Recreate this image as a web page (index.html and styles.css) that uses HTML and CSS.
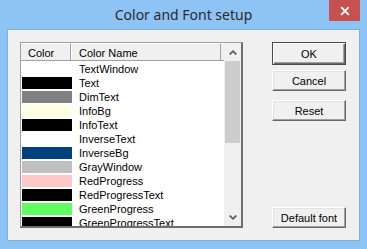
FILE: index.html
```html
<!DOCTYPE html>
<html>
<head>
<meta charset="utf-8">
<link rel="stylesheet" href="styles.css">
</head>
<body>
<div class="window">
  <div class="titlebar">
    <span class="title">Color and Font setup</span>
    <div class="close">
      <svg width="10" height="10" viewBox="0 0 10 10"><path d="M1.2 1.2 L8.8 8.8 M8.8 1.2 L1.2 8.8" stroke="#fff" stroke-width="1.9" fill="none"/></svg>
    </div>
  </div>
  <div class="client">
    <div class="listbox">
      <div class="list-main">
        <div class="header">
          <div class="hcell hcolor">Color</div>
          <div class="hcell hname">Color Name</div>
          <div class="hfill"></div>
        </div>
        <div class="rows">
          <div class="row"><span class="sw sw-white"></span><span class="name">TextWindow</span></div>
          <div class="row"><span class="sw sw-black"></span><span class="name">Text</span></div>
          <div class="row"><span class="sw sw-gray"></span><span class="name">DimText</span></div>
          <div class="row"><span class="sw sw-info"></span><span class="name">InfoBg</span></div>
          <div class="row"><span class="sw sw-black"></span><span class="name">InfoText</span></div>
          <div class="row"><span class="sw sw-white"></span><span class="name">InverseText</span></div>
          <div class="row"><span class="sw sw-blue"></span><span class="name">InverseBg</span></div>
          <div class="row"><span class="sw sw-silver"></span><span class="name">GrayWindow</span></div>
          <div class="row"><span class="sw sw-pink"></span><span class="name">RedProgress</span></div>
          <div class="row"><span class="sw sw-black"></span><span class="name">RedProgressText</span></div>
          <div class="row"><span class="sw sw-green"></span><span class="name">GreenProgress</span></div>
          <div class="row"><span class="sw sw-black"></span><span class="name">GreenProgressText</span></div>
        </div>
      </div>
      <div class="scrollbar">
        <div class="sb-btn sb-up">
          <svg width="8" height="5" viewBox="0 0 8 5"><path d="M0.7 4.5 L4 1.2 L7.3 4.5" stroke="#606060" stroke-width="1.8" fill="none"/></svg>
        </div>
        <div class="sb-track"><div class="thumb"></div></div>
        <div class="sb-btn sb-down">
          <svg width="8" height="5" viewBox="0 0 8 5"><path d="M0.7 0.5 L4 3.8 L7.3 0.5" stroke="#606060" stroke-width="1.8" fill="none"/></svg>
        </div>
      </div>
    </div>
    <div class="buttons">
      <button class="btn btn-default">OK</button>
      <button class="btn btn-cancel">Cancel</button>
      <button class="btn btn-reset">Reset</button>
      <button class="btn btn-font">Default font</button>
    </div>
  </div>
</div>
</body>
</html>
```
FILE: styles.css
```css
* { box-sizing: border-box; }
html, body { margin: 0; padding: 0; }
body { width: 367px; height: 249px; overflow: hidden; }

.window {
  width: 367px;
  height: 249px;
  background: #8ec4f5;
  display: flex;
  flex-direction: column;
}

.titlebar {
  position: relative;
  height: 29px;
  padding-top: 5px;
  text-align: center;
}
.title {
  font-family: "Noto Sans", "Open Sans", sans-serif;
  font-size: 14px;
  line-height: 19px;
  color: #2b2b2b;
}
.close {
  position: absolute;
  right: 7px;
  top: 0;
  width: 31px;
  height: 21px;
  background: #c75050;
  display: flex;
  align-items: center;
  justify-content: center;
}
.close svg { display: block; margin-top: 1px; }

.client {
  margin: 0 7px;
  height: 212px;
  border: 1px solid #7eafde;
  background: #f0f0f0;
  display: flex;
  align-items: flex-start;
  padding: 12px 0 0 12px;
  font-family: "Liberation Sans", Arial, sans-serif;
  font-size: 11px;
  color: #000;
}

.listbox {
  width: 223px;
  height: 186px;
  border-style: solid;
  border-width: 1px 2px 2px 1px;
  border-color: #a0a0a0 #6e6e6e #6e6e6e #a0a0a0;
  display: flex;
  background: #fff;
}
.list-main {
  width: 203px;
  display: flex;
  flex-direction: column;
}
.header {
  height: 18px;
  display: flex;
  background: #f0f0f0;
  border-bottom: 1px solid #a0a0a0;
}
.hcell {
  height: 17px;
  padding-top: 3px;
  line-height: 12px;
  border-right: 1px solid #a0a0a0;
  border-left: 1px solid #fff;
  border-top: 1px solid #fff;
  white-space: nowrap;
}
.hcolor { width: 50px; padding-left: 7px; border-left: none; }
.hname { width: 150px; padding-left: 7px; }
.hfill { flex: 1; border-top: 1px solid #fff; }

.rows {
  height: 165px;
  overflow: hidden;
  padding-top: 2px;
  background: #fff;
}
.row {
  height: 14px;
  display: flex;
  align-items: flex-start;
}
.sw {
  width: 50px;
  height: 12px;
  margin-left: 1px;
  flex: none;
}
.name {
  margin-left: 7px;
  line-height: 12px;
  white-space: nowrap;
}
.sw-white { background: #fff; }
.sw-black { background: #000; }
.sw-gray { background: #808080; }
.sw-info { background: #ffffe1; }
.sw-blue { background: #00407c; }
.sw-silver { background: #c0c0c0; }
.sw-pink { background: #ffc8c8; }
.sw-green { background: #60ff60; }

.scrollbar {
  width: 17px;
  display: flex;
  flex-direction: column;
  background: #f0f0f0;
}
.sb-btn {
  display: flex;
  align-items: center;
  justify-content: center;
}
.sb-btn svg { display: block; }
.sb-up { height: 18px; }
.sb-down { height: 17px; }
.sb-track { flex: 1; padding: 0 1px; }
.thumb { height: 82px; background: #cdcdcd; }

.buttons {
  margin-left: 29px;
  width: 74px;
  height: 186px;
  display: flex;
  flex-direction: column;
}
.btn {
  width: 74px;
  height: 21px;
  padding: 0;
  margin: 0;
  background: #f0f0f0;
  font-family: "Liberation Sans", Arial, sans-serif;
  font-size: 11px;
  color: #000;
  border-style: solid;
  border-width: 1px;
  border-color: #fff #696969 #696969 #fff;
  box-shadow: inset -1px -1px 0 #a0a0a0, inset 1px 1px 0 #e3e3e3;
}
.btn-default {
  height: 23px;
  border: 1px solid #4a4a4a;
  box-shadow: inset 1px 1px 0 #fff, inset -1px -1px 0 #696969, inset -2px -2px 0 #a0a0a0;
}
.btn-cancel { margin-top: 5px; }
.btn-reset { margin-top: 9px; }
.btn-font { margin-top: auto; }
```
